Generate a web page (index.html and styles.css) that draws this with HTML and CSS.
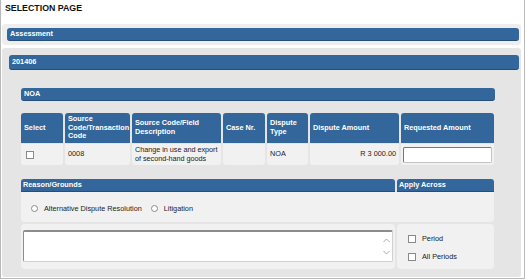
FILE: index.html
```html
<!DOCTYPE html>
<html lang="en">
<head>
    <meta charset="UTF-8">
    <title>Selection Page</title>
    <link rel="stylesheet" href="styles.css">
</head>
<body>
    <div class="page">
        <h1 class="title">SELECTION PAGE</h1>

        <div class="panel panel-assessment">
            <div class="bar">Assessment</div>
        </div>

        <div class="panel panel-period">
            <div class="bar bar-period">201406</div>

            <div class="noa">
                <div class="bar">NOA</div>

                <div class="grid">
                    <div class="th">Select</div>
                    <div class="th">Source Code/Transaction Code</div>
                    <div class="th">Source Code/Field Description</div>
                    <div class="th">Case Nr.</div>
                    <div class="th">Dispute Type</div>
                    <div class="th">Dispute Amount</div>
                    <div class="th">Requested Amount</div>

                    <div class="td"><span class="check"></span></div>
                    <div class="td">0008</div>
                    <div class="td td-desc">Change in use and export of second-hand goods</div>
                    <div class="td"></div>
                    <div class="td">NOA</div>
                    <div class="td td-amount">R 3 000.00</div>
                    <div class="td td-input"><span class="input"></span></div>
                </div>

                <div class="reason">
                    <div class="sub-head">Reason/Grounds</div>
                    <div class="sub-head">Apply Across</div>

                    <div class="radio-row">
                        <label class="option"><span class="radio"></span>Alternative Dispute Resolution</label>
                        <label class="option"><span class="radio"></span>Litigation</label>
                    </div>

                    <div class="text-cell">
                        <div class="textbox">
                            <div class="scroll">
                                <svg width="7" height="5" viewBox="0 0 7 5"><path d="M0.5 4 L3.5 1 L6.5 4" fill="none" stroke="#a8a8a8" stroke-width="1"/></svg>
                                <svg width="7" height="5" viewBox="0 0 7 5"><path d="M0.5 1 L3.5 4 L6.5 1" fill="none" stroke="#a8a8a8" stroke-width="1"/></svg>
                            </div>
                        </div>
                    </div>

                    <div class="apply-cell">
                        <label class="option"><span class="check"></span>Period</label>
                        <label class="option"><span class="check"></span>All Periods</label>
                    </div>
                </div>
            </div>
        </div>
    </div>
</body>
</html>
```

FILE: styles.css
```css
:root {
    --blue: #33669a;
    --blue-dark: #244f7b;
    --panel: #e5e5e5;
    --light: #f1f1f1;
}

* {
    box-sizing: border-box;
}

body {
    margin: 0;
    font-family: "Liberation Sans", Arial, sans-serif;
    font-size: 7.3px;
    color: #222;
    background: #fff;
}

.page {
    width: 525px;
    height: 279px;
    display: flex;
    flex-direction: column;
    border: 1px solid #b9b9b9;
    border-top: none;
    padding-bottom: 1px;
}

.title {
    height: 24px;
    margin: 0;
    padding: 3px 0 0 4px;
    font-size: 8.8px;
    font-weight: bold;
    color: #111;
}

.panel {
    margin: 0 3px 0 1px;
    border-radius: 3px;
}

.panel-assessment {
    background: #eeeeee;
    padding: 4px 2px 4px 5px;
}

.panel-period {
    flex: 1;
    margin-top: 3px;
    background: var(--panel);
    padding: 7px 2px 0 7px;
}

.bar {
    height: 13px;
    line-height: 12px;
    padding-left: 3px;
    background: var(--blue);
    border-bottom: 1px solid var(--blue-dark);
    border-radius: 3px;
    color: #fff;
    font-weight: bold;
}

.bar-period {
    height: 15px;
    line-height: 14px;
}

.noa {
    margin: 18px 24px 0 12px;
}

.grid {
    display: grid;
    grid-template-columns: 42px 65px 89px 42px 41px 89px 93px;
    grid-template-rows: 30px 21px;
    column-gap: 2px;
    row-gap: 1px;
    margin-top: 12px;
}

.th {
    display: flex;
    align-items: center;
    padding: 0 3px;
    background: var(--blue);
    border-radius: 3px 3px 0 0;
    color: #fff;
    font-weight: bold;
    line-height: 8.6px;
}

.td {
    display: flex;
    align-items: center;
    padding: 0 3px;
    background: var(--light);
    border-radius: 0 0 3px 3px;
    line-height: 8.6px;
}

.td-desc {
    padding: 0 1px 0 3px;
    letter-spacing: -0.05px;
}

.td-amount {
    justify-content: flex-end;
}

.td-input {
    padding: 0 2px;
}

.input {
    width: 89px;
    height: 16px;
    background: #fff;
    border: 1px solid #c4c4c4;
    border-top-color: #777;
    border-left-color: #777;
    border-radius: 2px;
}

.check {
    display: inline-block;
    width: 8px;
    height: 8px;
    background: #fff;
    border: 1px solid #8a8a8a;
    margin-left: 2px;
}

.reason {
    display: grid;
    grid-template-columns: 374px 97px;
    grid-template-rows: 13px 30px 47px;
    column-gap: 2px;
    margin-top: 14px;
}

.sub-head {
    padding-left: 2px;
    line-height: 12px;
    background: var(--blue);
    border-bottom: 1px solid var(--blue-dark);
    border-radius: 3px 3px 0 0;
    color: #fff;
    font-weight: bold;
}

.radio-row {
    grid-column: 1 / 3;
    display: flex;
    align-items: center;
    gap: 9px;
    padding: 2px 0 0 10px;
    background: var(--light);
    border-radius: 0 0 4px 4px;
}

.option {
    display: flex;
    align-items: center;
    gap: 6px;
}

.radio {
    width: 7px;
    height: 7px;
    border: 1px solid #8a8a8a;
    border-radius: 50%;
    background: #fff;
}

.text-cell {
    margin-top: 2px;
    padding: 6px 2px 0 2px;
    background: var(--light);
    border-radius: 4px;
}

.textbox {
    height: 32px;
    display: flex;
    justify-content: flex-end;
    background: #fff;
    border: 1px solid #d0d0d0;
    border-top: 2px solid #8c8c8c;
    border-left-color: #8c8c8c;
    border-radius: 2px;
}

.scroll {
    display: flex;
    flex-direction: column;
    justify-content: center;
    gap: 7px;
    padding-right: 2px;
}

.apply-cell {
    margin-top: 2px;
    display: flex;
    flex-direction: column;
    justify-content: center;
    gap: 9px;
    padding: 2px 0 0 11px;
    background: var(--light);
    border-radius: 4px;
}

.apply-cell .check {
    margin-left: 0;
}
```
